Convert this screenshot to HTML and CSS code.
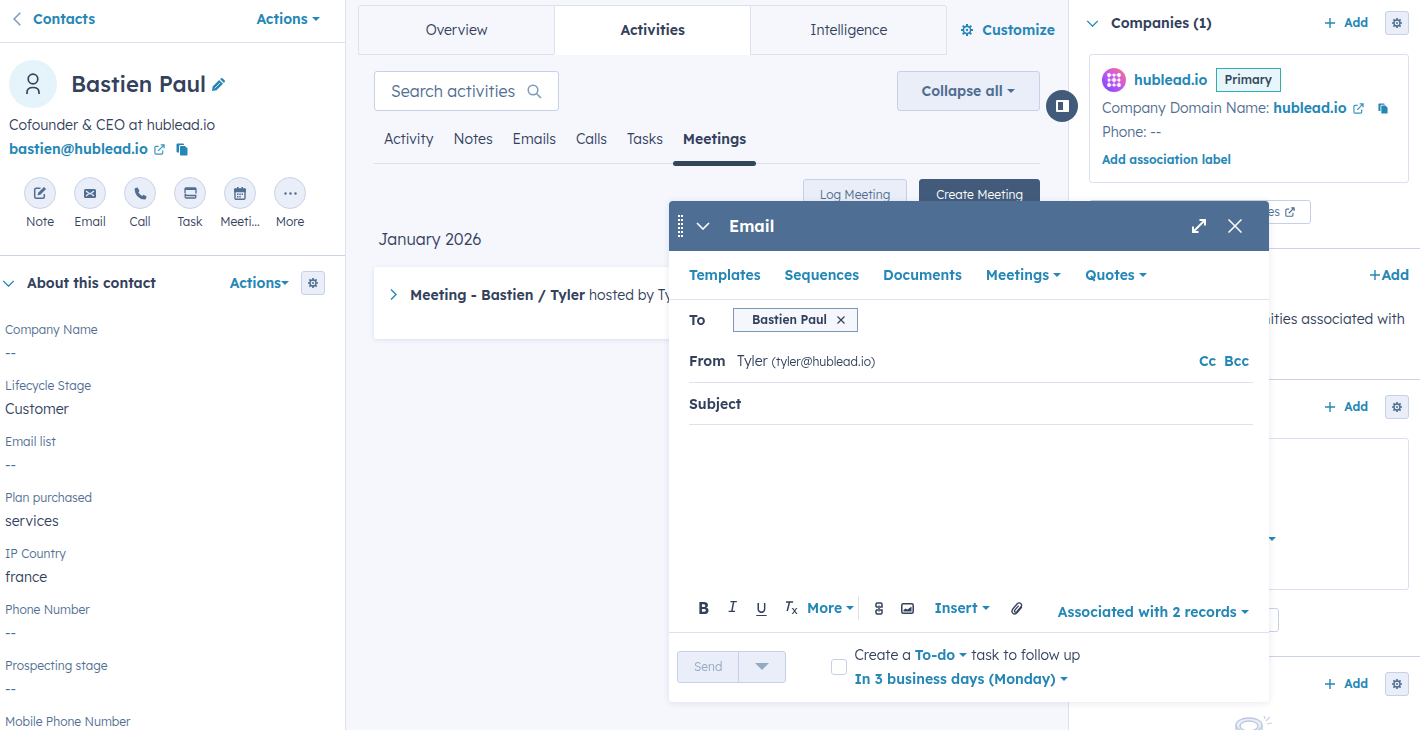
FILE: index.html
```html
<!DOCTYPE html>
<html lang="en">
<head>
    <meta charset="UTF-8">
    <meta name="viewport" content="width=device-width, initial-scale=1.0">
    <title>Bastien Paul</title>
    <link rel="stylesheet" href="styles.css">
</head>
<body>
<!-- icons used more than once -->
<svg class="sprite" aria-hidden="true">
    <symbol id="gear" viewBox="0 0 12 12">
        <g fill="none" stroke="currentColor">
            <circle cx="6" cy="6" r="3.6" stroke-width="1.6"/>
            <path d="M6 0v2.4M6 9.6V12M0 6h2.4M9.6 6H12M1.7 1.7l1.7 1.7M8.6 8.6l1.7 1.7M1.7 10.3l1.7-1.7M8.6 3.4l1.7-1.7" stroke-width="2"/>
        </g>
        <circle cx="6" cy="6" r="1.2" fill="currentColor"/>
    </symbol>
    <symbol id="external" viewBox="0 0 12 12">
        <path d="M5 2.5H2.2Q1 2.500 1 3.700V9.800Q1 11 2.200 11H8.300Q9.500 11 9.500 9.800V7M4.500 7.500L10.800 1.200M7.300 1H11V4.700" fill="none" stroke="currentColor" stroke-width="1.300"/>
    </symbol>
    <symbol id="copy" viewBox="0 0 12 13">
        <path d="M1.500 0.500h5.500q1 0 1 1v.5H4.500Q3 2 3 3.500V9.500H1.500q-1 0-1-1v-7q0-1 1-1z" fill="currentColor"/>
        <path d="M5 3h4l2.500 2.500V11.500q0 1-1 1H5q-1 0-1-1V4q0-1 1-1z" fill="currentColor"/>
    </symbol>
    <symbol id="down" viewBox="0 0 14 8">
        <path d="M1 1l6 6 6-6" fill="none" stroke="currentColor" stroke-width="1.600"/>
    </symbol>
    <symbol id="plus" viewBox="0 0 10 10">
        <path d="M5 0v10M0 5h10" fill="none" stroke="currentColor" stroke-width="1.400"/>
    </symbol>
</svg>

<div class="page">
    <!-- contact -->
    <aside class="contact">
        <div class="contact-nav">
            <a href="#" class="link back">
                <svg width="8" height="14" viewBox="0 0 8 14"><path d="M7.300 0.700L1 7l6.300 6.300" fill="none" stroke="#7c98b6" stroke-width="1.500"/></svg>
                Contacts
            </a>
            <button class="link">Actions <span class="caret"></span></button>
        </div>

        <div class="profile">
            <div class="who">
                <div class="avatar">
                    <svg width="16" height="22" viewBox="0 0 16 22"><g fill="none" stroke="#33475b" stroke-width="1.700"><circle cx="8" cy="6" r="4.800"/><path d="M2 21v-1.500c0-3.200 2.500-5 6-5s6 1.800 6 5V21"/></g></svg>
                </div>
                <h1>Bastien Paul</h1>
                <button class="link edit" aria-label="Edit name">
                    <svg width="13" height="13" viewBox="0 0 12 12"><path d="M0 12l.6-4.200L6.600 1.800 10.200 5.400l-6 6zM7.400 1L8.200.4q.8-.8 1.700 0l1.700 1.700q.8.800 0 1.700l-.6.800z" fill="currentColor"/><path d="M2.500 9.500l5-5" stroke="#fff" stroke-width=".7"/></svg>
                </button>
            </div>
            <p>Cofounder &amp; CEO at hublead.io</p>
            <p class="mail">
                <a href="#" class="link">bastien@hublead.io</a>
                <svg class="blue thin" width="11" height="11"><use href="#external"/></svg>
                <svg class="blue" width="12" height="13"><use href="#copy"/></svg>
            </p>
        </div>

        <div class="quick">
            <button><span class="circle"><svg width="14" height="14" viewBox="0 0 14 14"><path d="M7.500 2.200H3.200Q1.700 2.200 1.700 3.700v7.100q0 1.500 1.500 1.500h6.600q1.500 0 1.500-1.500V8" fill="none" stroke="currentColor" stroke-width="1.500"/><path d="M4.500 9.500l.7-2.800L11 .9 13.100 3 7.300 8.800z" fill="currentColor"/></svg></span>Note</button>
            <button><span class="circle"><svg width="12" height="9" viewBox="0 0 12 9"><rect width="12" height="9" rx="1.500" fill="currentColor"/><path d="M2 2l4 3 4-3M2 7l2.500-2M10 7L7.500 5" fill="none" stroke="#eaeef8" stroke-width="1.200"/></svg></span>Email</button>
            <button><span class="circle"><svg width="13" height="13" viewBox="0 0 13 13"><path d="M3.700.5L1.500 1Q.5 1.300.6 2.400 1.200 11.300 10.500 12.500q1.200.1 1.500-1l.6-2-3-1.700-1.500 1.300Q5.600 7.700 4.400 5.200L5.500 4z" fill="currentColor"/></svg></span>Call</button>
            <button><span class="circle"><svg width="13" height="12" viewBox="0 0 13 12"><path d="M1 6V2Q1 1 2 1h9q1 0 1 1v4.500M1.200 7v3q0 1 1 1h8.600q1 0 1-1V8.500H3.500Q1.200 8.500 1.200 6.500" fill="none" stroke="currentColor" stroke-width="1.300"/><path d="M1 1h11v2H1z" fill="currentColor"/></svg></span>Task</button>
            <button><span class="circle"><svg width="12" height="13" viewBox="0 0 12 13"><path d="M1 2h10v9q0 1.300-1.300 1.300H2.300Q1 12.300 1 11z" fill="none" stroke="currentColor" stroke-width="1.400"/><path d="M0 2h12v3.200H0zM3 0h1.500v2H3zM7.500 0H9v2H7.500z" fill="currentColor"/><path d="M3 7.200h6M3 9.700h4" stroke="currentColor" stroke-width="1.500" stroke-dasharray="1.500 .8"/></svg></span>Meeti...</button>
            <button><span class="circle"><svg width="13" height="3" viewBox="0 0 13 3"><g fill="currentColor"><circle cx="1.500" cy="1.500" r="1.200"/><circle cx="6.500" cy="1.500" r="1.200"/><circle cx="11.500" cy="1.500" r="1.200"/></g></svg></span>More</button>
        </div>

        <div class="about">
            <div class="about-head">
                <svg class="blue" width="13" height="7"><use href="#down"/></svg>
                <h2>About this contact</h2>
                <button class="link tight">Actions<span class="caret"></span></button>
                <button class="gear" aria-label="Settings"><svg width="10" height="10"><use href="#gear"/></svg></button>
            </div>
            <dl>
                <dt>Company Name</dt><dd class="empty">--</dd>
                <dt>Lifecycle Stage</dt><dd>Customer</dd>
                <dt>Email list</dt><dd class="empty">--</dd>
                <dt>Plan purchased</dt><dd>services</dd>
                <dt>IP Country</dt><dd>france</dd>
                <dt>Phone Number</dt><dd class="empty">--</dd>
                <dt>Prospecting stage</dt><dd class="empty">--</dd>
                <dt>Mobile Phone Number</dt><dd class="empty">--</dd>
            </dl>
        </div>
    </aside>

    <!-- timeline -->
    <main class="timeline">
        <div class="top">
            <div class="tabs">
                <button>Overview</button>
                <button class="on">Activities</button>
                <button>Intelligence</button>
            </div>
            <button class="link customize"><svg width="12" height="12"><use href="#gear"/></svg>Customize</button>
        </div>

        <div class="feed">
            <div class="tools">
                <div class="search">
                    <input type="text" placeholder="Search activities" aria-label="Search activities">
                    <svg width="15" height="15" viewBox="0 0 15 15"><g fill="none" stroke="#7c98b6" stroke-width="1.500"><circle cx="6" cy="6" r="4.800"/><path d="M9.500 9.500L14 14"/></g></svg>
                </div>
                <button class="btn collapse">Collapse all <span class="caret"></span></button>
            </div>
            <div class="filters">
                <button>Activity</button>
                <button>Notes</button>
                <button>Emails</button>
                <button>Calls</button>
                <button>Tasks</button>
                <button class="on">Meetings</button>
            </div>
            <div class="create">
                <button class="btn">Log Meeting</button>
                <button class="btn dark">Create Meeting</button>
            </div>
            <h3>January 2026</h3>
            <div class="event">
                <svg class="blue" width="7" height="11" viewBox="0 0 7 11"><path d="M1 .5l5 5-5 5" fill="none" stroke="currentColor" stroke-width="1.400"/></svg>
                <p><b>Meeting - Bastien / Tyler</b> hosted by Tyler</p>
            </div>
        </div>
    </main>

    <!-- associations -->
    <aside class="side">
        <section>
            <div class="side-head">
                <svg class="blue" width="13" height="7"><use href="#down"/></svg>
                <h2>Companies (1)</h2>
                <button class="link small"><svg width="10" height="10"><use href="#plus"/></svg>Add</button>
                <button class="gear" aria-label="Settings"><svg width="10" height="10"><use href="#gear"/></svg></button>
            </div>
            <div class="card">
                <div class="company">
                    <svg width="24" height="24" viewBox="0 0 24 24">
                        <defs><linearGradient id="logo" x1="0" y1="1" x2="1" y2="0"><stop offset="0" stop-color="#7048ff"/><stop offset=".5" stop-color="#c455f0"/><stop offset="1" stop-color="#ff7a7a"/></linearGradient></defs>
                        <circle cx="12" cy="12" r="12" fill="url(#logo)"/>
                        <path d="M7 7v10M12 7v10M17 7v10M7 12h10M7 7h10M7 17h10" stroke="#fff" stroke-opacity=".6"/>
                        <g fill="#fff"><circle cx="7" cy="7" r="1.900"/><circle cx="12" cy="7" r="1.500"/><circle cx="17" cy="7" r="1.900"/><circle cx="7" cy="12" r="1.500"/><circle cx="12" cy="12" r="1.900"/><circle cx="17" cy="12" r="1.500"/><circle cx="7" cy="17" r="1.900"/><circle cx="12" cy="17" r="1.500"/><circle cx="17" cy="17" r="1.900"/></g>
                    </svg>
                    <a href="#" class="link">hublead.io</a>
                    <span class="tag">Primary</span>
                </div>
                <p class="domain">
                    <span>Company Domain Name:</span>
                    <a href="#" class="link">hublead.io</a>
                    <svg class="blue thin" width="11" height="11"><use href="#external"/></svg>
                    <svg class="blue copy" width="10" height="11"><use href="#copy"/></svg>
                </p>
                <p>Phone: --</p>
                <a href="#" class="link small assoc">Add association label</a>
            </div>
            <button class="view">View all associated Companies <svg width="10" height="10"><use href="#external"/></svg></button>
        </section>
        <section class="deals">
            <div class="side-head">
                <svg class="blue" width="13" height="7"><use href="#down"/></svg>
                <h2>Deals (0)</h2>
                <button class="link tight"><svg width="10" height="10"><use href="#plus"/></svg>Add</button>
            </div>
            <p>Track the revenue opportunities associated with this record.</p>
        </section>
        <section>
            <div class="side-head">
                <svg class="blue" width="13" height="7"><use href="#down"/></svg>
                <h2>Tickets (1)</h2>
                <button class="link small"><svg width="10" height="10"><use href="#plus"/></svg>Add</button>
                <button class="gear" aria-label="Settings"><svg width="10" height="10"><use href="#gear"/></svg></button>
            </div>
            <div class="card ticket">
                <p>Status:</p>
                <span class="caret blue"></span>
            </div>
            <button class="view short">View all associated Tickets</button>
        </section>
        <section>
            <div class="side-head">
                <svg class="blue" width="13" height="7"><use href="#down"/></svg>
                <h2>Attachments</h2>
                <button class="link small"><svg width="10" height="10"><use href="#plus"/></svg>Add</button>
                <button class="gear" aria-label="Settings"><svg width="10" height="10"><use href="#gear"/></svg></button>
            </div>
            <svg class="art" width="38" height="36" viewBox="0 0 38 36">
                <g fill="#eaeef8" stroke="#bcc6e2" stroke-width="1.300"><path d="M1 11v22q12 8 26 0V11"/><ellipse cx="14" cy="11" rx="13" ry="7"/><ellipse cx="14" cy="12" rx="9" ry="5" fill="#fff"/></g>
                <path d="M30 5l-1-3M31 7l4-4M32 10l5-1" stroke="#cbd3ea" stroke-width="1.200"/>
            </svg>
        </section>
    </aside>

    <button class="toggle" aria-label="Toggle sidebar">
        <svg width="13" height="12" viewBox="0 0 13 12"><rect width="13" height="12" rx="1" fill="#fff"/><rect x="2" y="2" width="5" height="8" fill="#425b76"/></svg>
    </button>
</div>

<!-- email composer -->
<div class="email">
    <div class="email-head">
        <span class="grip"></span>
        <svg width="14" height="8"><use href="#down"/></svg>
        <h2>Email</h2>
        <button aria-label="Expand"><svg width="14" height="14" viewBox="0 0 14 14"><path d="M2 12L12 2M7.500 1H13v5.500M6.500 13H1V7.500" fill="none" stroke="currentColor" stroke-width="1.900"/></svg></button>
        <button aria-label="Close"><svg width="14" height="14" viewBox="0 0 14 14"><path d="M0.500 0.500l13 13M13.500 0.500l-13 13" stroke="currentColor" stroke-width="1.500"/></svg></button>
    </div>
    <div class="email-tabs">
        <button class="link">Templates</button>
        <button class="link">Sequences</button>
        <button class="link">Documents</button>
        <button class="link">Meetings <span class="caret"></span></button>
        <button class="link">Quotes <span class="caret"></span></button>
    </div>
    <div class="fields">
        <div class="row to">
            <b>To</b>
            <span class="chip">Bastien Paul <button aria-label="Remove"><svg width="8" height="8" viewBox="0 0 8 8"><path d="M.5.5l7 7M7.500.5l-7 7" stroke="currentColor" stroke-width="1.200"/></svg></button></span>
        </div>
        <div class="row line">
            <b>From</b>
            <span class="sender">Tyler <small>(tyler@hublead.io)</small></span>
            <button class="link">Cc</button>
            <button class="link">Bcc</button>
        </div>
        <div class="row line">
            <label for="subject">Subject</label>
            <input type="text" id="subject">
        </div>
        <textarea aria-label="Message"></textarea>
    </div>
    <div class="format">
        <button class="f-bold">B</button>
        <button class="f-italic">I</button>
        <button class="f-under">U</button>
        <button class="f-clear">T<small>x</small></button>
        <button class="link more">More <span class="caret"></span></button>
        <button aria-label="Link"><svg width="8" height="13" viewBox="0 0 8 13"><path d="M1 5V2.200Q1 1 2.200 1h3.600Q7 1 7 2.200V5H5M1 8v2.800Q1 12 2.200 12h3.600Q7 12 7 10.800V8H5M3 5H1M3 8H1M4 3.500v6" fill="none" stroke="currentColor" stroke-width="1.500"/></svg></button>
        <button aria-label="Image"><svg width="13" height="11" viewBox="0 0 13 11"><rect x=".8" y=".8" width="11.400" height="9.400" rx="1.500" fill="none" stroke="currentColor" stroke-width="1.500"/><path d="M2.500 8.500V7l2-1.500 2 1L10.500 3.500v5z" fill="currentColor"/></svg></button>
        <button class="link insert">Insert <span class="caret"></span></button>
        <button aria-label="Attach"><svg width="12" height="13" viewBox="0 0 12 13"><path d="M10.800 5L6.200 10.600Q4 13 1.900 11.300-.1 9.500 1.800 7L6.200 1.800Q7.900.1 9.700 1.500q1.700 1.500.3 3.300L5.800 9.600q-1 1-1.900.3-.9-.8-.1-1.800L7.600 3.700" fill="none" stroke="currentColor" stroke-width="1.300"/></svg></button>
        <button class="link records">Associated with 2 records <span class="caret"></span></button>
    </div>
    <div class="email-foot">
        <div class="send">
            <button disabled>Send</button>
            <button disabled aria-label="Send options"><span class="arrow"></span></button>
        </div>
        <input type="checkbox" id="todo">
        <div class="todo">
            <div><label for="todo">Create a</label> <button class="link">To-do <span class="caret"></span></button> task to follow up</div>
            <button class="link">In 3 business days (Monday) <span class="caret"></span></button>
        </div>
    </div>
</div>
</body>
</html>
```
FILE: styles.css
```css
* {
    box-sizing: border-box;
}
body {
    margin: 0;
    font-family: "Lexend Deca", Inter, "Open Sans", sans-serif;
    font-size: 14px;
    font-weight: 300;
    line-height: 24px;
    color: #33415c;
    background: #fff;
    overflow: hidden;
}
h1, h2, h3, p, dl, dd {
    margin: 0;
}
h2 {
    font-size: 14px;
    font-weight: 600;
}
b {
    font-weight: 600;
}
button {
    font: inherit;
    color: inherit;
    background: none;
    border: none;
    padding: 0;
    cursor: pointer;
    white-space: nowrap;
}
input, textarea {
    font: inherit;
    color: inherit;
    border: none;
    background: none;
    outline: none;
    min-width: 0;
}
svg {
    flex: none;
}
.sprite {
    display: none;
}
.blue {
    color: #2587b6;
}
.link {
    color: #2587b6;
    font-weight: 600;
    text-decoration: none;
}
.small {
    font-size: 12px;
}
.caret {
    display: inline-block;
    border: 4px solid transparent;
    border-top-color: currentColor;
    border-bottom: none;
    vertical-align: 3px;
}
.gear {
    display: flex;
    align-items: center;
    justify-content: center;
    width: 24px;
    height: 24px;
    color: #506e91;
    background: #eaeef8;
    border: 1px solid #c6d1e8;
    border-radius: 3px;
}

.page {
    display: flex;
    height: 100vh;
}

/* contact */
.contact {
    width: 346px;
    flex: none;
    overflow: hidden;
    border-right: 1px solid #dfe1f0;
}
.contact-nav {
    display: flex;
    justify-content: space-between;
    padding: 7px 25px 11px 13px;
    border-bottom: 1px solid #dfe1f0;
}
.back {
    display: flex;
    align-items: center;
    gap: 12px;
}
.profile {
    padding: 17px 9px 0;
}
.who {
    display: flex;
    align-items: center;
    padding-bottom: 5px;
}
.avatar {
    display: flex;
    align-items: center;
    justify-content: center;
    width: 48px;
    height: 48px;
    border-radius: 50%;
    background: #e5f3fa;
    margin-right: 14px;
}
h1 {
    font-size: 22px;
    font-weight: 500;
}
.edit {
    display: flex;
    margin-left: 6px;
}
.mail {
    display: flex;
    align-items: center;
}
.mail svg {
    margin-left: 6px;
}
.mail svg + svg {
    margin-left: 11px;
}
.thin {
    opacity: 0.9;
}
.quick {
    display: flex;
    padding: 16px 0 21px 15px;
    border-bottom: 1px solid #c9d4e8;
}
.quick button {
    width: 50px;
    font-size: 12px;
}
.circle {
    display: flex;
    align-items: center;
    justify-content: center;
    width: 32px;
    height: 32px;
    margin: 0 auto 1px;
    color: #506e91;
    background: #eaeef8;
    border: 1px solid #c9d2ea;
    border-radius: 50%;
}
.about {
    padding-top: 15px;
}
.about-head {
    display: flex;
    align-items: center;
    padding: 0 20px 0 2px;
}
.about-head h2 {
    flex: 1;
    margin-left: 12px;
}
.about-head .gear {
    margin-left: 12px;
}
dl {
    padding: 24px 5px 0;
}
dt {
    font-size: 12px;
    line-height: 22px;
    color: #506e91;
}
dd {
    margin-bottom: 10px;
}
.empty {
    color: #506e91;
}

/* timeline */
.timeline {
    flex: 1;
    min-width: 0;
    padding: 5px 13px 0 12px;
    background: #f5f7fd;
}
.top {
    display: flex;
    gap: 14px;
}
.tabs {
    display: flex;
    flex: 1;
    border: 1px solid #dde1ee;
    border-radius: 3px 3px 0 0;
}
.tabs button {
    flex: 1;
    height: 48px;
}
.tabs button + button {
    border-left: 1px solid #dde1ee;
}
.tabs .on {
    background: #fff;
    box-shadow: 0 1px #fff;
    font-weight: 600;
}
.customize {
    display: flex;
    align-items: center;
    gap: 9px;
}
.feed {
    padding: 16px 15px 0 16px;
}
.tools {
    display: flex;
    justify-content: space-between;
}
.search {
    display: flex;
    align-items: center;
    width: 185px;
    height: 40px;
    padding: 0 16px;
    background: #fff;
    border: 1px solid #c6d1e8;
    border-radius: 3px;
}
.search input {
    flex: 1;
    padding: 0;
    font-size: 16px;
    font-weight: 300;
}
.search input::placeholder {
    color: #506e91;
    opacity: 1;
}
.btn {
    height: 32px;
    padding: 0 16px;
    font-size: 12px;
    color: #506e91;
    background: #eaeef8;
    border: 1px solid #c6d1e8;
    border-radius: 3px;
}
.collapse {
    height: 40px;
    padding: 0 24px;
    font-size: 14px;
    font-weight: 600;
}
.dark {
    color: #fff;
    background: #425b7b;
    border-color: #425b7b;
}
.filters {
    display: flex;
    padding: 16px 0 0;
    border-bottom: 1px solid #dde1ee;
}
.filters button {
    position: relative;
    padding: 0 10px 12px;
}
.filters .on {
    font-weight: 600;
}
.filters .on::after {
    content: "";
    position: absolute;
    left: 0;
    right: 0;
    bottom: -3px;
    height: 5px;
    border-radius: 3px;
    background: #33475b;
}
.create {
    display: flex;
    justify-content: flex-end;
    gap: 12px;
    padding-top: 15px;
}
h3 {
    margin: 16px 4px;
    font-size: 16px;
    font-weight: 300;
}
.event {
    display: flex;
    align-items: flex-start;
    gap: 13px;
    padding: 16px 16px 32px;
    background: #fff;
    border-radius: 3px;
    box-shadow: 0 1px 4px rgba(80, 90, 150, 0.15);
}
.event svg {
    margin-top: 6px;
}

/* associations */
.side {
    width: 352px;
    flex: none;
    overflow: hidden;
    border-left: 1px solid #dbdff0;
}
.side section {
    padding: 11px 11px 24px 20px;
    border-bottom: 1px solid #c9d4e8;
}
.side-head {
    display: flex;
    align-items: center;
    margin-left: -3px;
}
.side-head h2 {
    flex: 1;
    margin-left: 12px;
}
.side-head .link {
    display: flex;
    align-items: center;
    gap: 9px;
}
.side-head .tight {
    gap: 1px;
}
.side-head .gear {
    margin-left: 17px;
}
.card {
    margin: 19px 0 17px;
    padding: 13px 12px 10px;
    border: 1px solid #dbdff0;
    border-radius: 3px;
    color: #506e91;
}
.company {
    display: flex;
    align-items: center;
    gap: 8px;
    padding-bottom: 4px;
}
.tag {
    padding: 0 8px;
    font-size: 12px;
    line-height: 22px;
    font-weight: 500;
    color: #33475b;
    background: #e8f5fa;
    border: 1px solid #2bb3ab;
}
.domain {
    display: flex;
    align-items: center;
    white-space: nowrap;
}
.domain a {
    margin: 0 6px 0 4px;
}
.copy {
    margin-left: 14px;
}
.assoc {
    display: block;
    margin-top: 4px;
}
.view {
    display: block;
    width: 222px;
    height: 24px;
    font-size: 12px;
    line-height: 22px;
    color: #506e91;
    border: 1px solid #c6d1e8;
    border-radius: 3px;
}
.view svg {
    margin-left: 2px;
    vertical-align: -1px;
}
.short {
    width: 190px;
}
.deals p {
    margin-top: 20px;
}
.side .deals {
    padding-top: 14px;
}
.side .deals ~ section {
    padding-top: 15px;
}
.ticket {
    display: flex;
    justify-content: space-between;
    align-items: center;
    height: 152px;
    margin-bottom: 18px;
    padding: 50px 132px 0 12px;
}
.art {
    display: block;
    margin: 18px auto 0 146px;
}

.toggle {
    position: fixed;
    top: 90px;
    right: 342px;
    display: flex;
    align-items: center;
    justify-content: center;
    width: 32px;
    height: 32px;
    border-radius: 50%;
    background: #425b7b;
}

/* email composer */
.email {
    position: fixed;
    right: 151px;
    bottom: 28px;
    display: flex;
    flex-direction: column;
    width: 600px;
    height: 501px;
    background: #fff;
    border-radius: 4px;
    box-shadow: 0 1px 6px rgba(80, 80, 150, 0.14);
}
.email-head {
    display: flex;
    align-items: center;
    height: 50px;
    padding: 0 27px 0 9px;
    color: #fff;
    background: #4f6e94;
    border-radius: 4px 4px 0 0;
}
.email-head h2 {
    flex: 1;
    margin-left: 19px;
    font-size: 16px;
}
.email-head button {
    display: flex;
    margin-left: 22px;
}
/* two columns of dots */
.grip {
    width: 5px;
    height: 22px;
    margin-right: 13px;
    background: repeating-linear-gradient(transparent 0 2px, #4f6e94 2px 4px), repeating-linear-gradient(90deg, #fff 0 2px, #4f6e94 2px 3px);
}
.email-tabs {
    display: flex;
    gap: 24px;
    padding: 12px 20px;
    border-bottom: 1px solid #dfe1f0;
}
.fields {
    display: flex;
    flex-direction: column;
    flex: 1;
    padding: 0 16px 0 20px;
}
.row {
    display: flex;
    align-items: center;
    height: 42px;
}
.to {
    height: 40px;
}
.line {
    border-bottom: 1px solid #dfe1f0;
}
.to + .line {
    height: 43px;
}
.row b {
    width: 44px;
}
.row label {
    font-weight: 600;
}
.row input {
    flex: 1;
}
.row .link {
    margin-right: 4px;
}
.row .link + .link {
    margin-left: 4px;
}
.chip {
    display: flex;
    align-items: center;
    gap: 10px;
    padding: 0 12px 0 18px;
    font-size: 12px;
    line-height: 22px;
    font-weight: 600;
    background: #f5f7fd;
    border: 1px solid #7c98b6;
}
.chip button {
    display: flex;
}
.sender {
    flex: 1;
    margin-left: 4px;
}
small {
    font-size: 12px;
}
textarea {
    flex: 1;
    resize: none;
}
.format {
    display: flex;
    align-items: center;
    height: 50px;
    padding: 0 20px;
    border-bottom: 1px solid #dfe1f0;
}
.format button {
    width: 28px;
    flex: none;
}
.format button.link {
    width: auto;
}
.format svg {
    vertical-align: middle;
}
.format .f-bold, .format .f-italic, .format .f-under, .format .f-clear {
    width: 29px;
}
.f-bold {
    font-size: 16px;
    font-weight: 700;
}
.f-italic {
    font-family: "Liberation Mono", monospace;
    font-size: 16px;
    font-style: italic;
}
.f-under {
    font-weight: 400;
    text-decoration: underline;
    text-underline-offset: 2px;
}
.f-clear {
    font-style: italic;
    font-weight: 400;
}
.f-clear small {
    vertical-align: -3px;
    font-size: 11px;
    font-style: normal;
}
.format .more {
    margin: 0 6px 0 2px;
    padding-right: 4px;
    border-right: 1px solid #dfe1f0;
}
.format .insert {
    margin: 0 13px;
}
.format .records {
    align-self: flex-end;
    margin-left: auto;
    padding-bottom: 8px;
}
.email-foot {
    display: flex;
    align-items: center;
    height: 69px;
    padding: 0 8px 2px;
}
.send {
    display: flex;
    border: 1px solid #c6d1e8;
    border-radius: 3px;
    background: #eaeef8;
}
.send button {
    height: 30px;
    padding: 0 16px;
    font-size: 12px;
    color: #93a9c4;
}
.send button + button {
    border-left: 1px solid #c6d1e8;
}
.arrow {
    display: block;
    border: 7px solid transparent;
    border-top-color: #93a9c4;
    border-bottom: none;
}
#todo {
    appearance: none;
    width: 16px;
    height: 16px;
    margin: 0 7px 0 45px;
    border: 1px solid #c6d1e8;
    border-radius: 3px;
}
```
